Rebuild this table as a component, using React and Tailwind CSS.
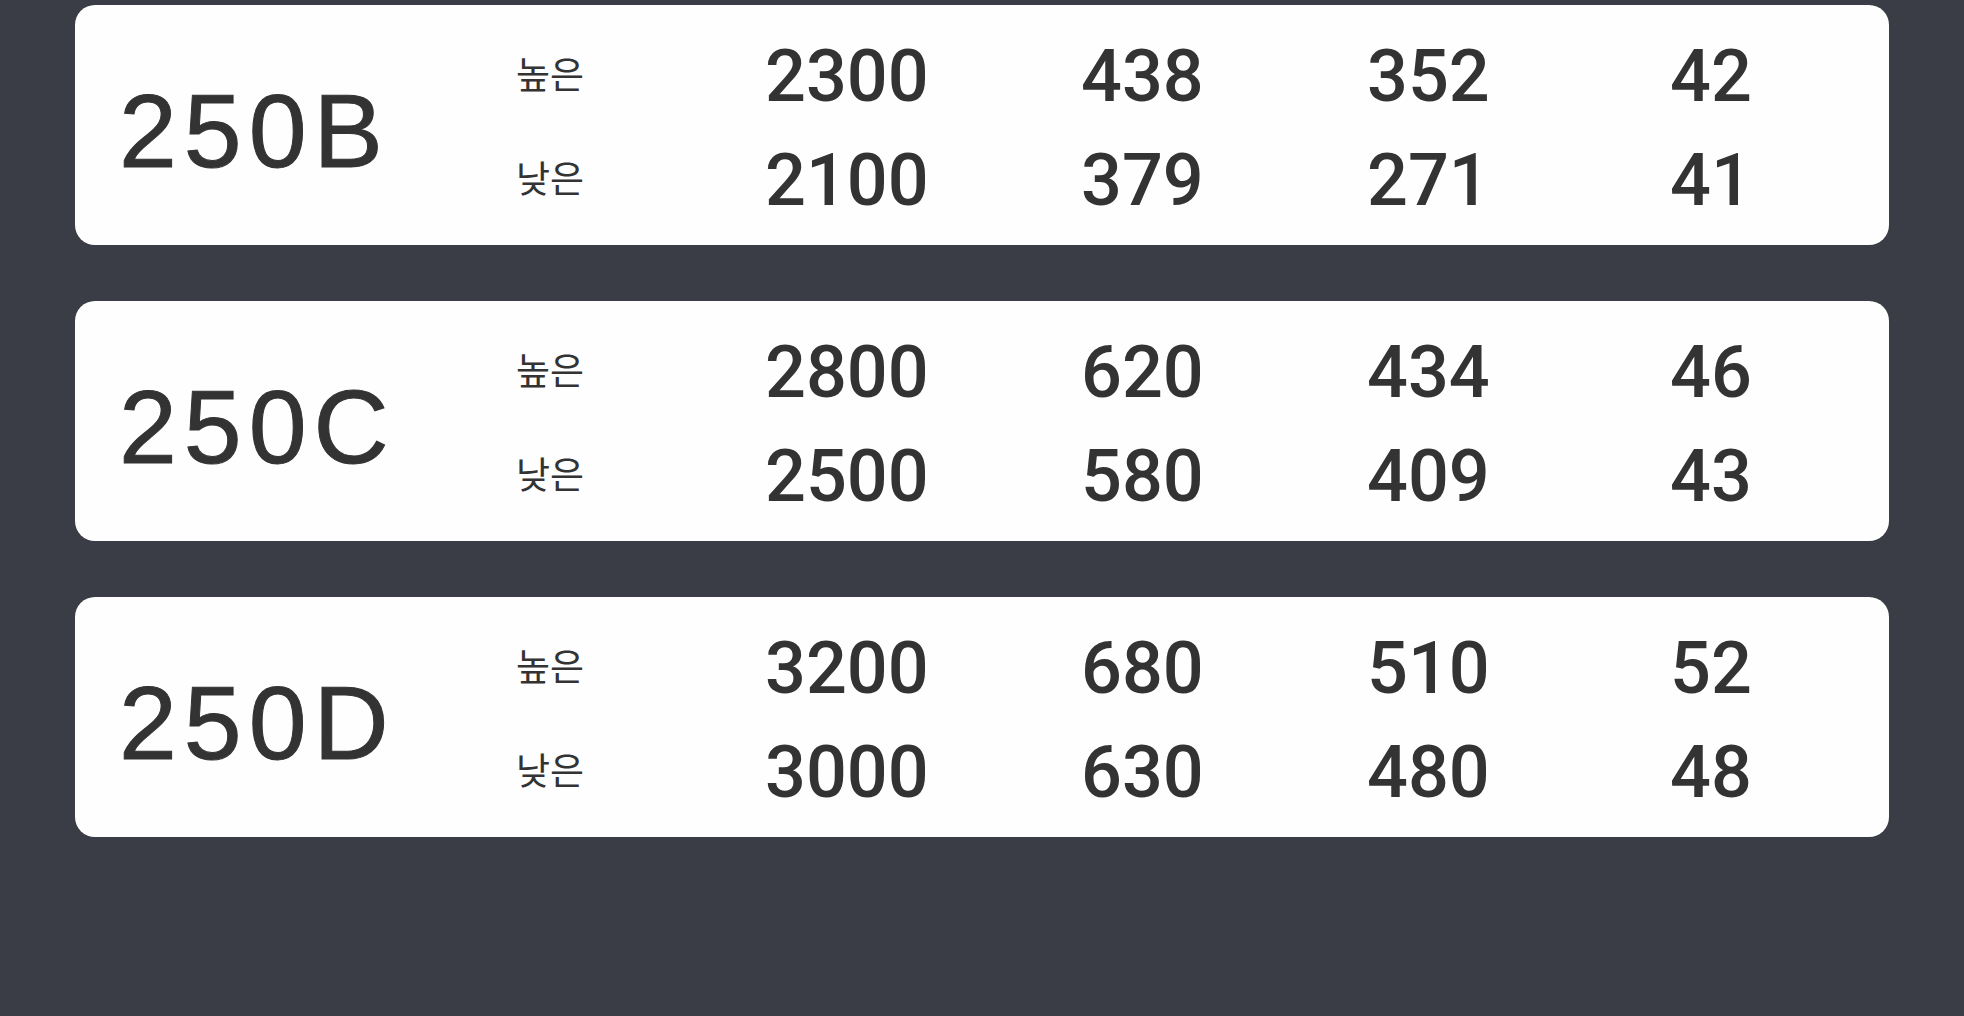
import React from 'react';

const models = [
  { name: '250B', high: ['2300', '438', '352', '42'], low: ['2100', '379', '271', '41'] },
  { name: '250C', high: ['2800', '620', '434', '46'], low: ['2500', '580', '409', '43'] },
  { name: '250D', high: ['3200', '680', '510', '52'], low: ['3000', '630', '480', '48'] },
];

function ModelCard({ model }) {
  return (
    <div className="flex h-[240px] items-center rounded-[20px] bg-[#fefefe] text-[#333333]">
      <div className="w-[441px] pl-[44px] pt-[12px] font-['Liberation_Sans',sans-serif] text-[104px] leading-none tracking-[7px] [-webkit-text-stroke:1px_#333333]">
        {model.name}
      </div>
      <div className="grid grid-cols-[249px_316px_286px_303px_1fr] grid-rows-[104px_104px] items-center pt-[8px] font-['Roboto',sans-serif] text-[72px] font-medium leading-none">
        <div className="-mt-[8px] font-['Noto_Sans_CJK_KR',sans-serif] text-[37px] font-normal">높은</div>
        {model.high.map((v, i) => (
          <div key={'h' + i}>{v}</div>
        ))}
        <div className="-mt-[8px] font-['Noto_Sans_CJK_KR',sans-serif] text-[37px] font-normal">낮은</div>
        {model.low.map((v, i) => (
          <div key={'l' + i}>{v}</div>
        ))}
      </div>
    </div>
  );
}

export default function App() {
  return (
    <div className="flex h-screen w-full flex-col gap-[56px] bg-[#3b3d46] px-[75px] pt-[5px]">
      {models.map((m) => (
        <ModelCard key={m.name} model={m} />
      ))}
    </div>
  );
}
